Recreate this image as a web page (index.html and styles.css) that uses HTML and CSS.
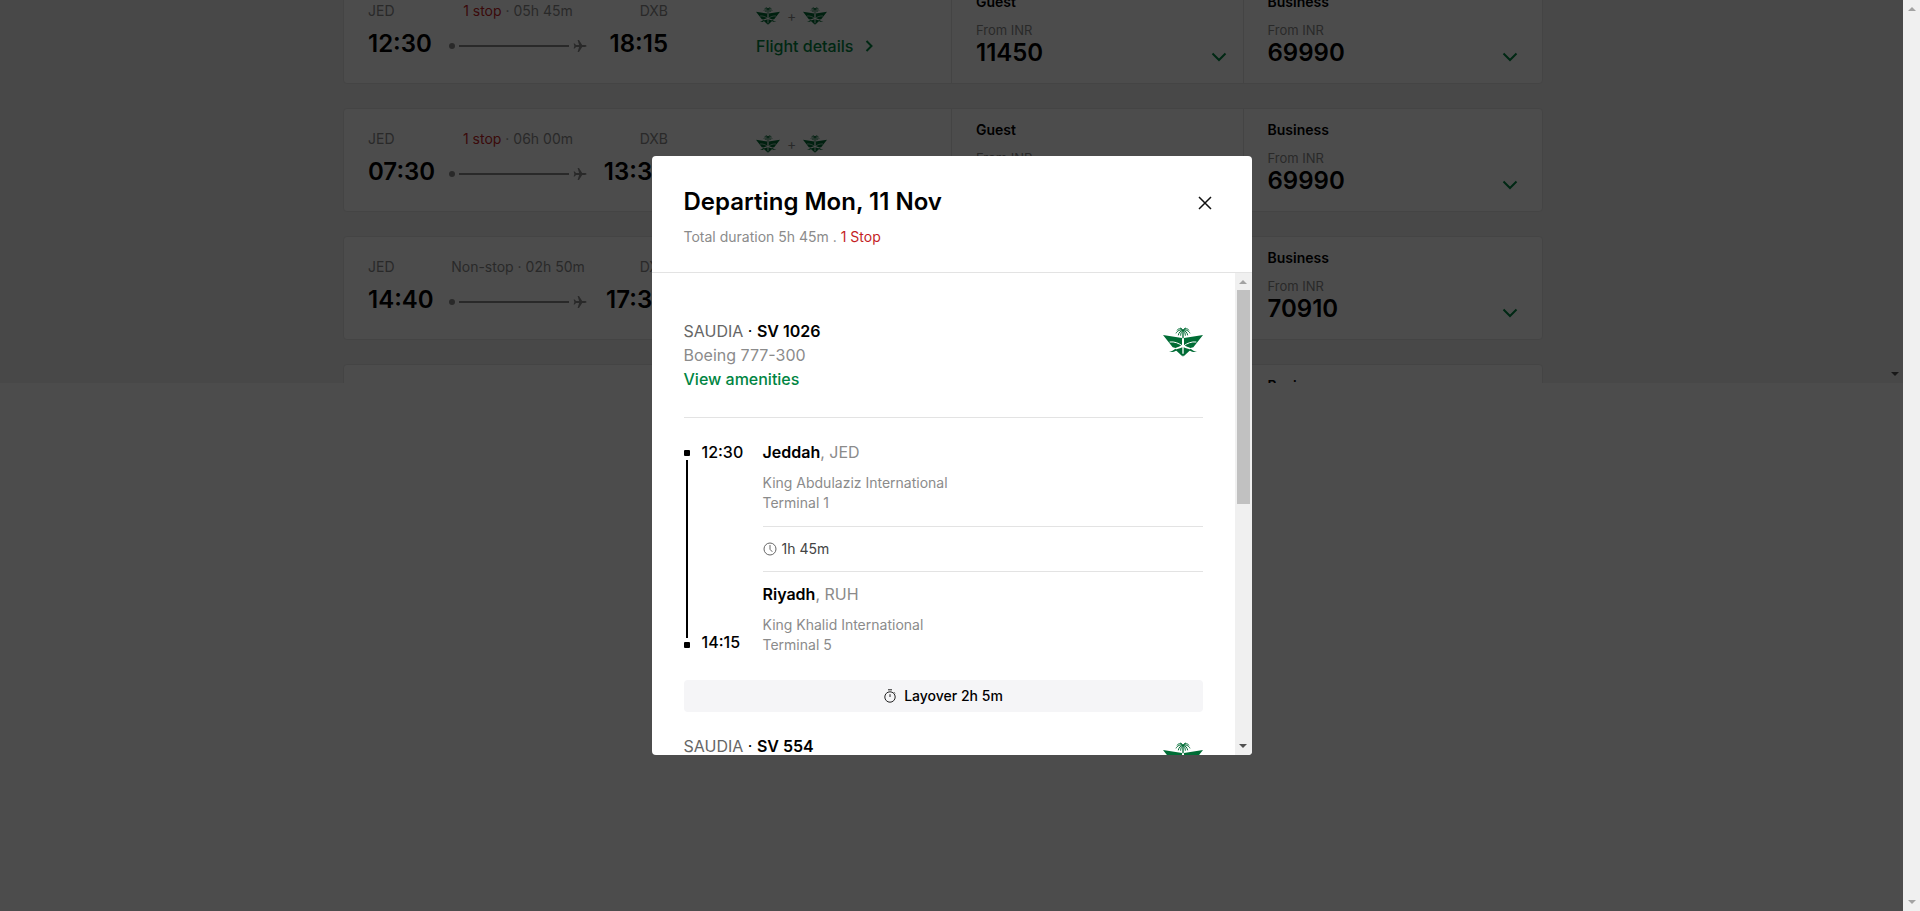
FILE: index.html
```html
<!DOCTYPE html>
<html lang="en">
<head>
<meta charset="utf-8">
<title>Select your flight</title>
<link rel="stylesheet" href="styles.css">
</head>
<body>
<svg class="defs" aria-hidden="true">
  <symbol id="emblem" viewBox="0 0 120 88">
    <path d="M0 23 57 32V54C50 57 45 60 38 62L29 60Z"/>
    <path d="M120 23 63 32V54C70 57 75 60 82 62L91 60Z"/>
    <path d="M58 60V87L37 67C45 65 51 63 58 60ZM62 60V87L83 67C75 65 69 63 62 60Z"/>
    <path d="M55 79 60 88 65 79ZM18 74C26 72 32 68 37 64L42 69C34 74 26 75 18 74ZM102 74C94 72 88 68 83 64L78 69C86 74 94 75 102 74Z"/>
    <path d="M58 8H62V33H58Z"/>
    <path class="cut" d="M20 44C34 42 48 48 57 55M100 44C86 42 72 48 63 55"/>
    <path class="frond" d="M60 10C54 1 45 4 42 9M60 10C66 1 75 4 78 9M60 9C52 5 42 11 39 18M60 9C68 5 78 11 81 18M59 10C53 9 47 16 46 24M61 10C67 9 73 16 74 24M59 11C55 12 53 19 53 25M61 11C65 12 67 19 67 25M60 10C58 5 54 1 51 3M60 10C62 5 66 1 69 3"/>
  </symbol>
  <symbol id="plane" viewBox="0 0 14 14">
    <path d="M13.500 7C13.500 6.400 12.800 6.100 12 6.100H9.200L6 1H4.600L6.100 6.100H3L1.700 4.400H.6L1.400 7 .6 9.600H1.700L3 7.900H6.100L4.600 13H6L9.200 7.900H12C12.800 7.900 13.500 7.600 13.500 7Z"/>
  </symbol>
  <symbol id="down" viewBox="0 0 16 10"><path d="M1.500 1.500 8 8 14.500 1.500"/></symbol>
</svg>

<div class="app">
  <div class="viewport">
    <div class="results">
      <main class="list">
        <article class="card">
          <section class="trip">
            <div class="route">
              <span class="code">JED</span><p class="stops"><a class="red" href="#">1 stop</a> · 05h 45m</p><span class="code end">DXB</span>
              <time class="hour">12:30</time><div class="path"><i class="dot"></i><i class="line"></i><svg class="plane"><use href="#plane"/></svg></div><time class="hour end">18:15</time>
            </div>
            <div class="carrier">
              <div class="logos"><svg class="mini"><use href="#emblem"/></svg><span>+</span><svg class="mini"><use href="#emblem"/></svg></div>
              <a class="details" href="#">Flight details <svg viewBox="0 0 8 12"><path d="M1.500 1 6.500 6 1.500 11"/></svg></a>
            </div>
          </section>
          <button class="fare"><span class="cabin">Guest</span><span class="from">From INR</span><span class="price">11450</span><svg class="down"><use href="#down"/></svg></button>
          <button class="fare"><span class="cabin">Business</span><span class="from">From INR</span><span class="price">69990</span><svg class="down"><use href="#down"/></svg></button>
        </article>
        <article class="card">
          <section class="trip">
            <div class="route">
              <span class="code">JED</span><p class="stops"><a class="red" href="#">1 stop</a> · 06h 00m</p><span class="code end">DXB</span>
              <time class="hour">07:30</time><div class="path"><i class="dot"></i><i class="line"></i><svg class="plane"><use href="#plane"/></svg></div><time class="hour end">13:30</time>
            </div>
            <div class="carrier">
              <div class="logos"><svg class="mini"><use href="#emblem"/></svg><span>+</span><svg class="mini"><use href="#emblem"/></svg></div>
              <a class="details" href="#">Flight details <svg viewBox="0 0 8 12"><path d="M1.500 1 6.500 6 1.500 11"/></svg></a>
            </div>
          </section>
          <button class="fare"><span class="cabin">Guest</span><span class="from">From INR</span><span class="price">11450</span><svg class="down"><use href="#down"/></svg></button>
          <button class="fare"><span class="cabin">Business</span><span class="from">From INR</span><span class="price">69990</span><svg class="down"><use href="#down"/></svg></button>
        </article>
        <article class="card">
          <section class="trip">
            <div class="route">
              <span class="code">JED</span><p class="stops">Non-stop · 02h 50m</p><span class="code end">DXB</span>
              <time class="hour">14:40</time><div class="path"><i class="dot"></i><i class="line"></i><svg class="plane"><use href="#plane"/></svg></div><time class="hour end">17:30</time>
            </div>
          </section>
          <button class="fare"><span class="cabin">Guest</span><span class="from">From INR</span><span class="price">11450</span><svg class="down"><use href="#down"/></svg></button>
          <button class="fare"><span class="cabin">Business</span><span class="from">From INR</span><span class="price">70910</span><svg class="down"><use href="#down"/></svg></button>
        </article>
        <article class="card">
          <section class="trip"></section>
          <button class="fare"><span class="cabin">Guest</span></button>
          <button class="fare"><span class="cabin">Business</span></button>
        </article>
      </main>
      <div class="scrollbar inner"><i class="arrow bottom dark"></i></div>
    </div>

    <div class="overlay">
      <div class="modal" role="dialog" aria-labelledby="title">
        <header class="head">
          <div>
            <h2 id="title">Departing Mon, 11 Nov</h2>
            <p class="total">Total duration 5h 45m . <span>1 Stop</span></p>
          </div>
          <button class="close" aria-label="Close"><svg viewBox="0 0 14 14"><path d="M1 1 13 13M13 1 1 13"/></svg></button>
        </header>
        <div class="body">
          <div class="content">
            <section class="flight">
              <div class="info"><p class="number">SAUDIA <b>· <strong>SV 1026</strong></b></p><p class="craft">Boeing 777-300</p><a href="#">View amenities</a></div>
              <svg class="emblem"><use href="#emblem"/></svg>
            </section>
            <section class="leg">
              <div class="rail"><i class="square"></i><i class="bar"></i><i class="square"></i></div>
              <div class="times"><time>12:30</time><time>14:15</time></div>
              <div class="places">
                <div class="place"><h3>Jeddah<span>, JED</span></h3><p>King Abdulaziz International<br>Terminal 1</p></div>
                <p class="duration"><svg viewBox="0 0 14 14"><circle cx="7" cy="7" r="6"/><path d="M7 3V7.300L9.300 9.800"/></svg>1h 45m</p>
                <div class="place"><h3>Riyadh<span>, RUH</span></h3><p>King Khalid International<br>Terminal 5</p></div>
              </div>
            </section>
            <p class="layover"><svg viewBox="0 0 14 14"><circle cx="7" cy="8" r="5.200"/><path d="M7 5.200V8M5 .8H9M11 3.300 12 4.300"/></svg>Layover 2h 5m</p>
            <section class="flight">
              <div class="info"><p class="number">SAUDIA <b>· <strong>SV 554</strong></b></p></div>
              <svg class="emblem"><use href="#emblem"/></svg>
            </section>
          </div>
          <div class="scrollbar"><i class="arrow"></i><i class="thumb"></i><i class="arrow bottom dark"></i></div>
        </div>
      </div>
    </div>
  </div>
  <div class="scrollbar"><i class="arrow"></i><i class="arrow bottom"></i></div>
</div>
</body>
</html>
```
FILE: styles.css
```css
* { box-sizing: border-box; }
body { margin: 0; font: 14px/20px Inter, "Liberation Sans", sans-serif; color: #000; }
h2, h3, p { margin: 0; }
a { text-decoration: none; }
button { border: 0; background: none; padding: 0; font: inherit; color: inherit; text-align: left; }
.defs { position: absolute; width: 0; height: 0; }
#emblem { fill: #006c35; }
.cut { fill: none; stroke: #fff; stroke-width: 3; }
.frond { fill: none; stroke: #006c35; stroke-width: 3; }

.app { display: flex; height: 100vh; overflow: hidden; }
.viewport { position: relative; flex: 1; }

/* results behind the dialog */
.results { display: flex; height: 42vh; overflow: hidden; background: #f1f1f1; }
.list { flex: 1; max-width: 1200px; margin: -20px auto 0; }
.card {
  display: grid; grid-template-columns: 608fr 292fr 300fr;
  height: 104px; margin-bottom: 24px;
  background: #fff; border: 1px solid #e3e3e3; border-radius: 4px;
}
.trip { display: flex; gap: 88px; padding: 20px 24px; }
.route { display: grid; grid-template-columns: 1fr auto 1fr; grid-template-rows: 20px 32px; row-gap: 7px; width: 300px; }
.code, .stops { color: #8b8b8b; }
.stops { text-align: center; }
.end { text-align: right; }
.red { color: #c41e25; }
.hour { font-size: 24px; line-height: 32px; font-weight: 600; }
.path { display: flex; align-items: center; gap: 4px; width: 138px; padding-top: 4px; }
.dot { width: 6px; height: 6px; border-radius: 50%; background: #8b8b8b; }
.line { flex: 1; height: 2px; background: #8b8b8b; }
.plane { width: 14px; height: 14px; fill: #8b8b8b; }
.carrier { padding-top: 5px; }
.logos { display: flex; align-items: center; gap: 7px; height: 20px; color: #8b8b8b; }
.mini { width: 24px; height: 18px; }
.details { display: flex; align-items: center; gap: 12px; margin-top: 8px; font-size: 16px; line-height: 24px; font-weight: 500; color: #008542; }
.details svg { width: 8px; height: 12px; fill: none; stroke: #008542; stroke-width: 2; }
.fare {
  display: grid; grid-template-columns: 1fr auto; align-content: start; align-items: end;
  padding: 11px 24px; border-left: 1px solid #e3e3e3;
}
.cabin, .from { grid-column: 1 / 3; }
.cabin { font-weight: 600; line-height: 20px; }
.from { font-size: 13px; line-height: 16px; margin-top: 10px; color: #8b8b8b; }
.price { font-size: 24px; line-height: 30px; font-weight: 600; }
.down { width: 16px; height: 10px; margin-bottom: 6px; margin-right: -8px; fill: none; stroke: #008542; stroke-width: 2; }
.card .fare:last-child .down { margin-right: 0; }

/* scrollbars */
.scrollbar { display: flex; flex-direction: column; align-items: center; width: 17px; padding: 7px 0; background: #f0f0f0; }
.scrollbar.inner { background: none; }
.arrow { border: 4px solid transparent; border-top: 0; border-bottom: 4px solid #a3a3a3; }
.arrow.bottom { margin-top: auto; border-bottom: 0; border-top: 4px solid #a3a3a3; }
.arrow.dark { border-top-color: #505050; }
.thumb { width: 13px; height: 214px; margin-top: 6px; background: #c1c1c1; }

/* dialog */
.overlay { position: absolute; inset: 0; display: flex; align-items: center; justify-content: center; background: rgba(0, 0, 0, .7); }
.modal { display: flex; flex-direction: column; width: 600px; height: 599px; max-width: 100%; max-height: 100%; background: #fff; border-radius: 4px; overflow: hidden; }
.head { display: flex; justify-content: space-between; align-items: flex-start; padding: 30px 40px 25px 32px; border-bottom: 1px solid #e3e3e3; }
h2 { font-size: 24px; line-height: 32px; font-weight: 600; }
.total { margin-top: 9px; color: #8b8b8b; }
.total span { color: #c41e25; }
.close { margin-top: 10px; }
.close svg { display: block; width: 14px; height: 14px; fill: none; stroke: #111; stroke-width: 1.500; }
.body { flex: 1; display: flex; min-height: 0; }
.content { flex: 1; padding: 46px 32px 0; overflow: hidden; font-size: 16px; line-height: 24px; }
.flight { display: flex; justify-content: space-between; align-items: flex-start; }
.number { color: #666; }
.number b { color: #000; font-weight: 400; }
.number strong { font-weight: 600; }
.craft { color: #8b8b8b; }
.info a { color: #008542; font-weight: 500; }
.emblem { width: 40px; height: 30px; margin-top: 8px; }
.leg { display: flex; margin-top: 26px; padding-top: 22px; border-top: 1px solid #e3e3e3; }
.rail { display: flex; flex-direction: column; align-items: center; gap: 4px; width: 6px; padding: 10px 0 7px; }
.square { width: 6px; height: 6px; border-radius: 1px; background: #000; }
.bar { flex: 1; width: 2px; background: #000; }
.times { display: flex; flex-direction: column; justify-content: space-between; width: 61px; margin-left: 12px; padding-bottom: 1px; font-weight: 500; }
.places { flex: 1; }
h3 { font-size: 16px; line-height: 24px; font-weight: 600; }
h3 span { font-weight: 400; color: #8b8b8b; }
.place p { margin-top: 9px; font-size: 14px; line-height: 20px; color: #8b8b8b; }
.duration { display: flex; align-items: center; gap: 5px; height: 46px; margin: 13px 0 10px; border: solid #e3e3e3; border-width: 1px 0; font-size: 14px; color: #444; }
.duration svg { width: 14px; height: 14px; fill: none; stroke: #666; }
.layover { display: flex; align-items: center; justify-content: center; gap: 7px; margin: 25px 0 22px; height: 32px; border-radius: 4px; background: #f5f5f7; font-size: 14px; font-weight: 500; }
.layover svg { width: 14px; height: 14px; fill: none; stroke: #222; }
```
